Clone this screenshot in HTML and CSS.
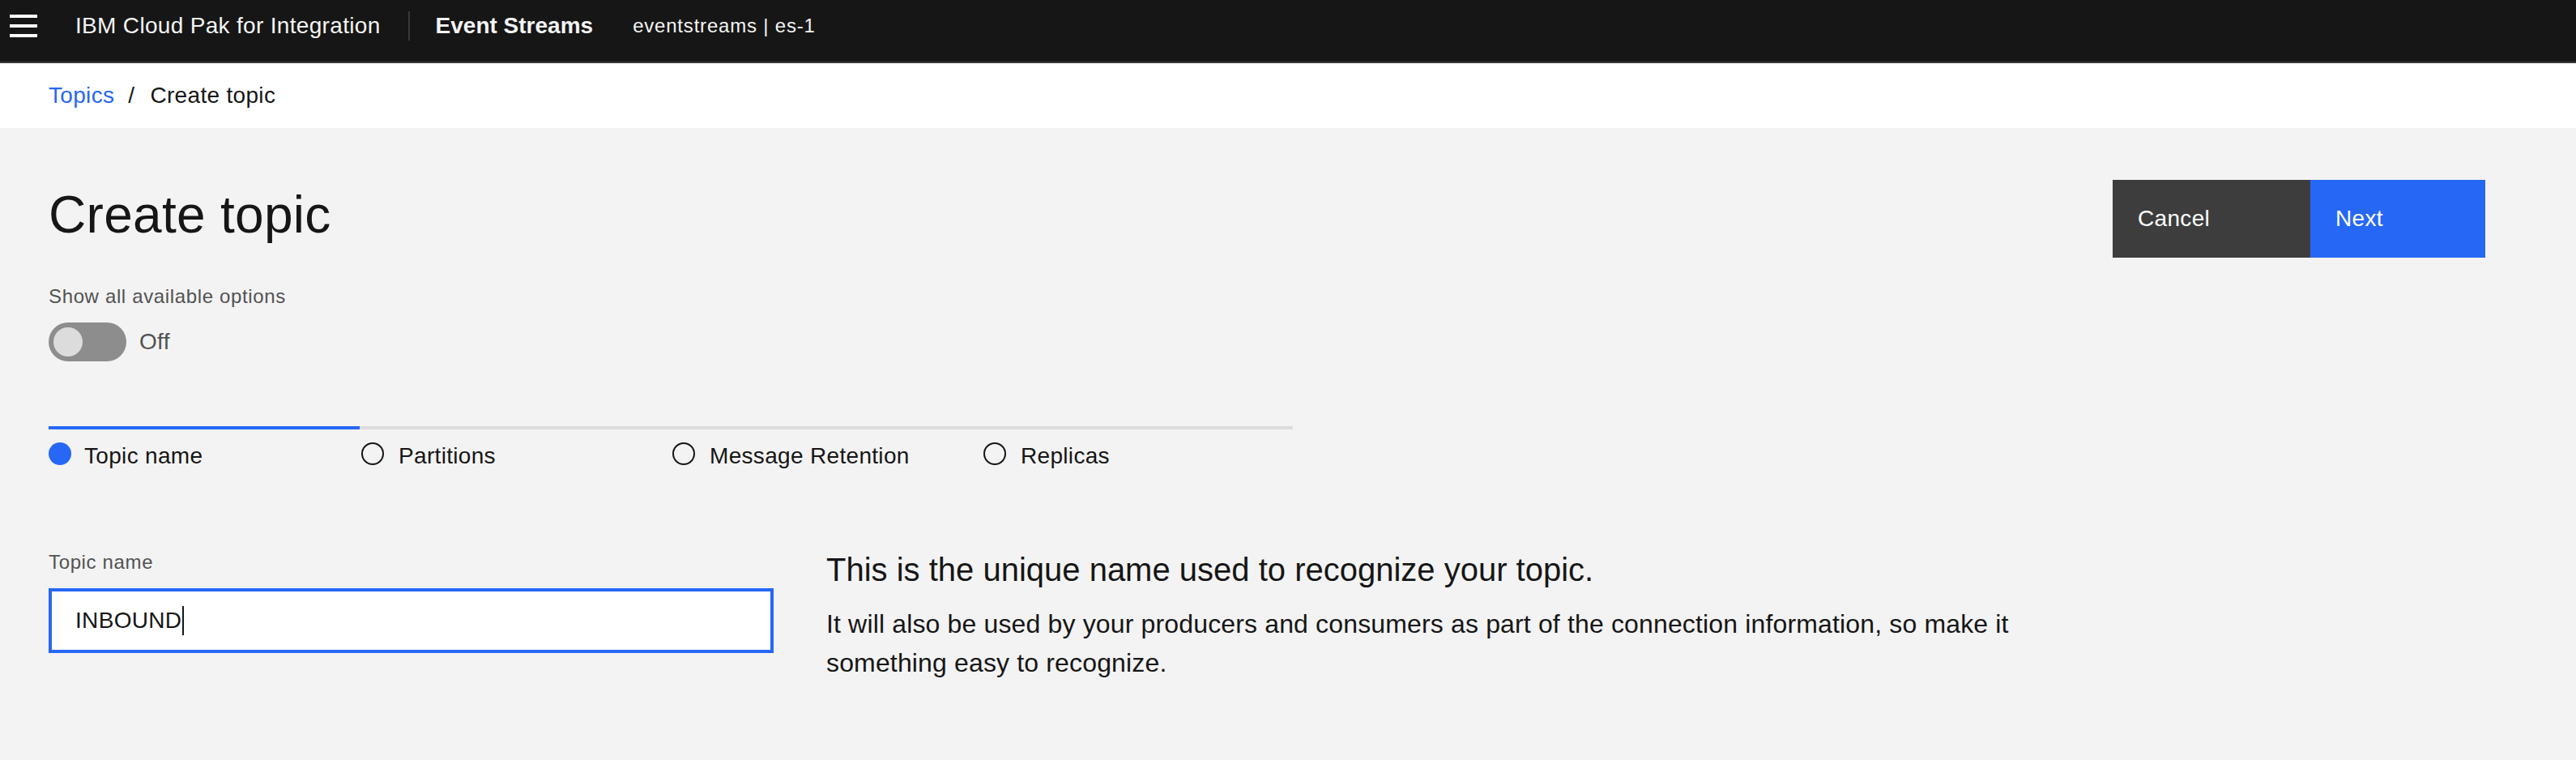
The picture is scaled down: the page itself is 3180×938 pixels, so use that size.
FILE: index.html
```html
<!DOCTYPE html>
<html lang="en">
<head>
<meta charset="utf-8">
<title>Create topic - Event Streams</title>
<link rel="stylesheet" href="styles.css">
</head>
<body>
<header class="topbar">
  <button class="menu-btn" aria-label="Menu">
    <svg width="34" height="28" viewBox="0 0 34 28"><rect x="0" y="0" width="34" height="4" fill="#fff"/><rect x="0" y="12" width="34" height="4" fill="#fff"/><rect x="0" y="24" width="34" height="4" fill="#fff"/></svg>
  </button>
  <span class="platform">IBM Cloud Pak for Integration</span>
  <span class="divider"></span>
  <span class="product">Event Streams</span>
  <span class="instance">eventstreams | es-1</span>
</header>
<nav class="breadcrumb">
  <a class="crumb-link" href="#">Topics</a><span class="crumb-sep">/</span><span class="crumb-current">Create topic</span>
</nav>
<main class="page">
  <div class="page-head">
    <div class="head-left">
      <h1 class="title">Create topic</h1>
      <div class="toggle-group">
        <div class="toggle-label">Show all available options</div>
        <div class="toggle-row">
          <span class="toggle"><span class="knob"></span></span>
          <span class="toggle-text">Off</span>
        </div>
      </div>
    </div>
    <div class="actions">
      <button class="btn btn-secondary">Cancel</button>
      <button class="btn btn-primary">Next</button>
    </div>
  </div>
  <ol class="progress">
    <li class="step current">
      <svg class="dot-filled" width="28" height="28" viewBox="0 0 28 28"><circle cx="14" cy="14" r="14" fill="#2767f6"/></svg>
      <span class="step-label">Topic name</span>
    </li>
    <li class="step">
      <svg class="dot-empty" width="32" height="32" viewBox="0 0 32 32"><circle cx="16" cy="16" r="13" fill="none" stroke="#161616" stroke-width="2"/></svg>
      <span class="step-label">Partitions</span>
    </li>
    <li class="step">
      <svg class="dot-empty" width="32" height="32" viewBox="0 0 32 32"><circle cx="16" cy="16" r="13" fill="none" stroke="#161616" stroke-width="2"/></svg>
      <span class="step-label">Message Retention</span>
    </li>
    <li class="step">
      <svg class="dot-empty" width="32" height="32" viewBox="0 0 32 32"><circle cx="16" cy="16" r="13" fill="none" stroke="#161616" stroke-width="2"/></svg>
      <span class="step-label">Replicas</span>
    </li>
  </ol>
  <div class="form-row">
    <div class="field">
      <div class="field-label">Topic name</div>
      <div class="input"><span class="input-text">INBOUND</span><span class="caret"></span></div>
    </div>
    <div class="desc">
      <h2 class="desc-title">This is the unique name used to recognize your topic.</h2>
      <p class="desc-text">It will also be used by your producers and consumers as part of the connection information, so make it something easy to recognize.</p>
    </div>
  </div>
</main>
</body>
</html>
```
FILE: styles.css
```css
html, body {
  margin: 0;
  padding: 0;
}
body {
  background: #f3f3f3;
  font-family: "Liberation Sans", Arial, sans-serif;
  color: #161616;
  min-height: 938px;
}

/* Top bar */
.topbar {
  display: flex;
  align-items: center;
  height: 64px;
  padding-bottom: 12px;
  background: #161616;
  border-bottom: 2px solid #393939;
}
.menu-btn {
  margin-left: 12px;
  padding: 0;
  border: 0;
  background: transparent;
  width: 34px;
  height: 28px;
  display: flex;
}
.platform {
  margin-left: 47px;
  font-size: 28px;
  line-height: 36px;
  letter-spacing: 0.32px;
  color: #f4f4f4;
}
.divider {
  margin-left: 34px;
  width: 2px;
  height: 36px;
  background: #393939;
}
.product {
  margin-left: 32px;
  font-size: 28px;
  line-height: 36px;
  font-weight: 700;
  letter-spacing: 0;
  color: #f4f4f4;
}
.instance {
  margin-left: 49px;
  font-size: 24px;
  line-height: 36px;
  letter-spacing: 0.8px;
  color: #f4f4f4;
}

/* Breadcrumb */
.breadcrumb {
  background: #ffffff;
  padding: 20px 60px;
  font-size: 28px;
  line-height: 40px;
  letter-spacing: 0.32px;
}
.crumb-link {
  color: #2767f6;
  text-decoration: none;
}
.crumb-sep {
  margin: 0 19px 0 17px;
  color: #161616;
}
.crumb-current {
  color: #161616;
}

/* Page */
.page {
  padding: 64px 112px 0 60px;
}
.page-head {
  display: flex;
  justify-content: space-between;
  align-items: flex-start;
}
.title {
  margin: 3px 0 0;
  font-size: 64px;
  line-height: 80px;
  font-weight: 400;
  letter-spacing: 0.3px;
  color: #161616;
}
.toggle-group {
  margin-top: 45px;
}
.toggle-label {
  font-size: 24px;
  line-height: 32px;
  letter-spacing: 0.64px;
  color: #525252;
}
.toggle-row {
  margin-top: 16px;
  display: flex;
  align-items: center;
  height: 48px;
}
.toggle {
  position: relative;
  width: 96px;
  height: 48px;
  border-radius: 24px;
  background: #8d8d8d;
}
.knob {
  position: absolute;
  left: 6px;
  top: 6px;
  width: 36px;
  height: 36px;
  border-radius: 50%;
  background: #dcdcdc;
}
.toggle-text {
  margin-left: 16px;
  font-size: 28px;
  line-height: 40px;
  letter-spacing: 0.32px;
  color: #525252;
}

.actions {
  display: flex;
}
.btn {
  height: 96px;
  border: 0;
  margin: 0;
  padding: 0 0 0 31px;
  text-align: left;
  font-family: inherit;
  font-size: 28px;
  letter-spacing: 0.32px;
  color: #ffffff;
}
.btn-secondary {
  width: 244px;
  background: #3d3d3d;
}
.btn-primary {
  width: 216px;
  background: #2767f6;
}

/* Progress indicator */
.progress {
  list-style: none;
  margin: 80px 0 0;
  padding: 0;
  display: flex;
  width: 1536px;
}
.step {
  width: 384px;
  border-top: 4px solid #dcdcdc;
  padding-top: 13px;
  display: flex;
  align-items: flex-start;
}
.step.current {
  border-top-color: #2767f6;
}
.dot-filled {
  margin-top: 3px;
  flex: none;
}
.dot-empty {
  margin-top: 1px;
  flex: none;
}
.step-label {
  margin-left: 16px;
  font-size: 28px;
  line-height: 40px;
  letter-spacing: 0.32px;
  color: #161616;
}

/* Form */
.form-row {
  margin-top: 92px;
  display: flex;
  gap: 65px;
  align-items: flex-start;
}
.field {
  width: 895px;
  padding-top: 3px;
}
.field-label {
  font-size: 24px;
  line-height: 32px;
  letter-spacing: 0.64px;
  color: #525252;
}
.input {
  margin-top: 16px;
  box-sizing: border-box;
  height: 80px;
  background: #ffffff;
  border: 4px solid #2767f6;
  padding-left: 29px;
  display: flex;
  align-items: center;
}
.input-text {
  font-size: 28px;
  line-height: 40px;
  letter-spacing: 0.32px;
  color: #161616;
}
.caret {
  display: inline-block;
  width: 2px;
  height: 36px;
  margin-left: 1px;
  background: #161616;
}
.desc {
  width: 1560px;
}
.desc-title {
  margin: 0;
  font-size: 40px;
  line-height: 56px;
  font-weight: 400;
  color: #161616;
}
.desc-text {
  margin: 15px 0 0;
  font-size: 32px;
  line-height: 48px;
  letter-spacing: 0.15px;
  color: #161616;
}
```
